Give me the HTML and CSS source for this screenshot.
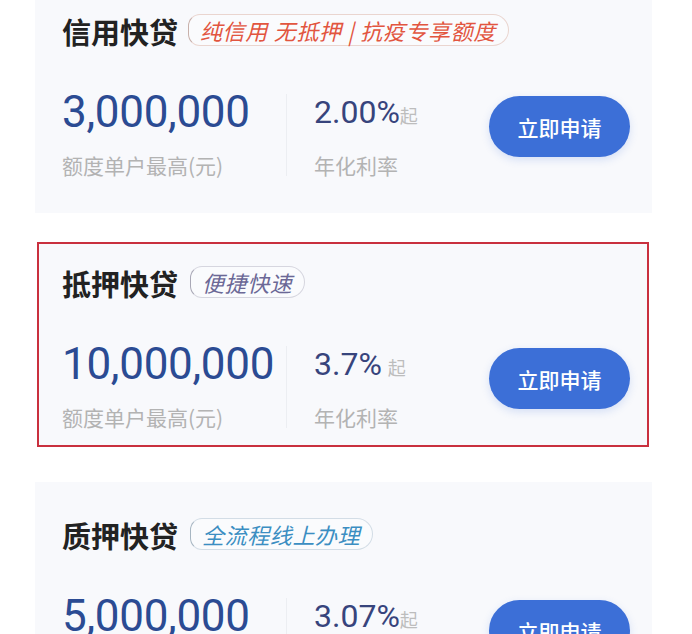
FILE: index.html
```html
<!DOCTYPE html>
<html lang="zh-CN">
<head>
<meta charset="utf-8">
<title>快贷产品</title>
<link rel="stylesheet" href="styles.css">
</head>
<body>
<div class="list">
  <section class="card">
    <div class="head">
      <h2 class="title">信用快贷</h2>
      <span class="tag tag-red">纯信用 无抵押 | 抗疫专享额度</span>
    </div>
    <div class="row">
      <div class="amount">
        <div class="num">3,000,000</div>
        <div class="label">额度单户最高(元)</div>
      </div>
      <div class="divider"></div>
      <div class="rate">
        <div class="rate-val"><span class="pct">2.00%</span><span class="qi">起</span></div>
        <div class="label">年化利率</div>
      </div>
      <button class="btn">立即申请</button>
    </div>
  </section>
  <section class="card marked">
    <div class="head">
      <h2 class="title">抵押快贷</h2>
      <span class="tag tag-purple">便捷快速</span>
    </div>
    <div class="row">
      <div class="amount">
        <div class="num">10,000,000</div>
        <div class="label">额度单户最高(元)</div>
      </div>
      <div class="divider"></div>
      <div class="rate">
        <div class="rate-val"><span class="pct">3.7%</span><span class="qi qi-gap">起</span></div>
        <div class="label">年化利率</div>
      </div>
      <button class="btn">立即申请</button>
    </div>
  </section>
  <section class="card">
    <div class="head">
      <h2 class="title">质押快贷</h2>
      <span class="tag tag-blue">全流程线上办理</span>
    </div>
    <div class="row">
      <div class="amount">
        <div class="num">5,000,000</div>
        <div class="label">额度单户最高(元)</div>
      </div>
      <div class="divider"></div>
      <div class="rate">
        <div class="rate-val"><span class="pct">3.07%</span><span class="qi">起</span></div>
        <div class="label">年化利率</div>
      </div>
      <button class="btn">立即申请</button>
    </div>
  </section>
</div>
</body>
</html>
```
FILE: styles.css
```css
html, body {
  margin: 0;
  padding: 0;
  background: #ffffff;
}
body {
  width: 692px;
  height: 634px;
  overflow: hidden;
  font-family: "Noto Sans CJK SC", "Noto Sans", sans-serif;
}
.list {
  margin-top: -22px;
  padding-left: 35px;
  display: flex;
  flex-direction: column;
  gap: 17px;
}
.card {
  position: relative;
  width: 617px;
  height: 235px;
  box-sizing: border-box;
  padding: 36px 22px 0 27px;
  background: #f8f9fc;
}
.card.marked {
  background: linear-gradient(#f8f9fc, #f8f9fc) 2px 12px / 612px 205px no-repeat;
}
.marked::after {
  content: "";
  position: absolute;
  top: 12px;
  left: 2px;
  right: 3px;
  bottom: 18px;
  border: 2px solid #c9303e;
}
.head {
  display: flex;
  align-items: center;
  gap: 10px;
  height: 34px;
}
.title {
  margin: 0;
  font-size: 29px;
  line-height: 34px;
  font-weight: 700;
  color: #222222;
}
.tag {
  display: inline-flex;
  align-items: center;
  height: 32px;
  box-sizing: border-box;
  padding: 0 12px 0 11px;
  margin-top: -2px;
  border: 1px solid #dcd6d4;
  border-left-color: #b9b1b0;
  border-radius: 12px 16px 16px 12px;
  font-size: 22px;
  font-style: italic;
  letter-spacing: 0.6px;
  line-height: 30px;
  background: rgba(255, 255, 255, 0.35);
}
.tag-red {
  color: #e2553f;
  border-color: #ead5cf;
  border-left-color: #c8b0aa;
  word-spacing: 0.5px;
}
.tag-purple {
  margin-left: 2px;
  color: #6b6896;
  border-color: #d6d6df;
  border-left-color: #a9a8b6;
}
.tag-blue {
  margin-left: 2px;
  color: #3b8ec2;
  border-color: #d3dde6;
  border-left-color: #a7b6c2;
}
.row {
  display: flex;
  align-items: flex-start;
  margin-top: 38px;
}
.amount {
  width: 224px;
  flex: none;
}
.num {
  font-family: Roboto, "Noto Sans", sans-serif;
  font-size: 44px;
  line-height: 52px;
  color: #2b4b93;
  letter-spacing: -0.3px;
}
.label {
  margin-top: 14px;
  font-size: 21px;
  line-height: 26px;
  color: #b3b3b3;
}
.divider {
  flex: none;
  width: 1px;
  height: 82px;
  margin-top: 8px;
  background: #eceef2;
}
.rate {
  margin-left: 27px;
  flex: none;
}
.rate-val {
  display: flex;
  align-items: baseline;
  height: 52px;
  line-height: 52px;
}
.pct {
  font-family: Roboto, "Noto Sans", sans-serif;
  font-size: 32px;
  color: #37447c;
}
.qi {
  font-size: 18px;
  color: #bdbdbd;
}
.qi-gap {
  margin-left: 6px;
}
.btn {
  margin-left: auto;
  margin-top: 10px;
  width: 141px;
  height: 61px;
  border: none;
  border-radius: 31px;
  background: #3c6fd7;
  color: #ffffff;
  font-family: "Noto Sans CJK SC", "Noto Sans", sans-serif;
  font-size: 21px;
  font-weight: 500;
  box-shadow: 0 3px 8px rgba(60, 111, 215, 0.18);
  padding: 0;
}
```
